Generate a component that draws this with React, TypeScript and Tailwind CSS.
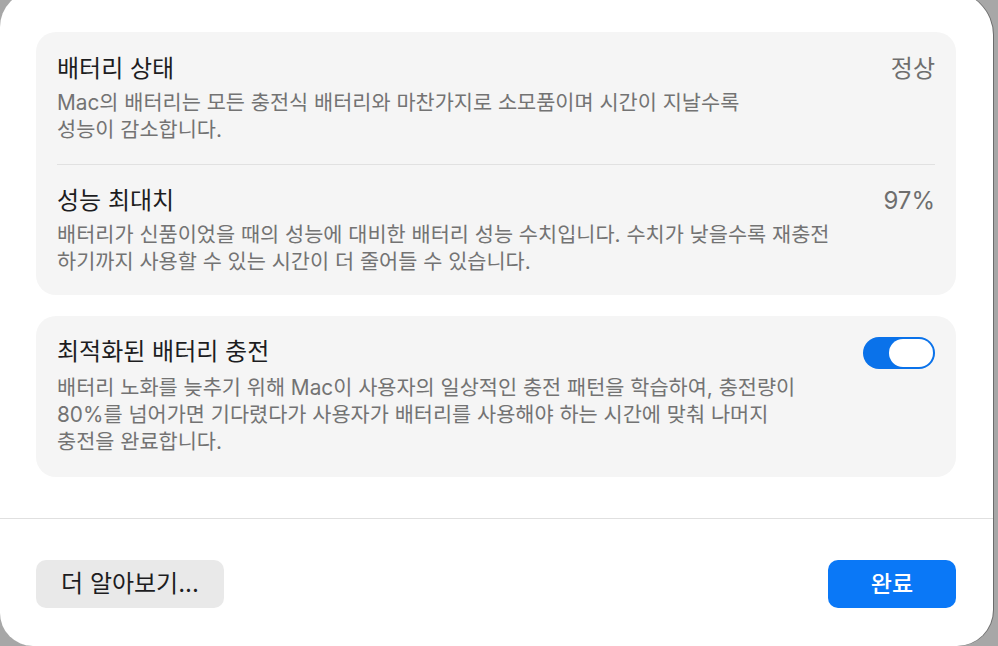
import React from "react";

const FONT = "font-['Inter','Noto_Sans_CJK_KR',sans-serif]";

function Row({
  title,
  right,
  lines,
  className,
}: {
  title: string;
  right?: React.ReactNode;
  lines: string[];
  className: string;
}) {
  return (
    <div className={`px-[21px] ${className}`}>
      <div className="flex items-start justify-between">
        <div className="text-[24px] leading-[30px] text-[#1d1d1f] whitespace-nowrap">{title}</div>
        {right}
      </div>
      <div className="mt-[5px] text-[20.8px] leading-[27px] text-[#737373] whitespace-nowrap">
        {lines.map((l, i) => (
          <div key={i}>{l}</div>
        ))}
      </div>
    </div>
  );
}

export default function App() {
  return (
    <div className={`w-[998px] h-[646px] overflow-hidden bg-[#a7a7a7] ${FONT}`}>
      <div className="mt-[-9px] w-[993px] h-[655px] rounded-tl-[36px] rounded-tr-[44px] rounded-bl-[33px] rounded-br-[36px] bg-white flex flex-col shadow-[1px_0_0_0_rgba(0,0,0,0.35)]">
        <div className="pt-[41px] pl-[36px] pr-[37px] pb-[41px] flex flex-col gap-[21px]">
          <div className="rounded-[20px] bg-[#f5f5f5]">
            <Row
              className="pt-[22px] pb-[21px]"
              title="배터리 상태"
              right={<div className="text-[24px] leading-[30px] text-[#6e6e6e]">정상</div>}
              lines={[
                "Mac의 배터리는 모든 충전식 배터리와 마찬가지로 소모품이며 시간이 지날수록",
                "성능이 감소합니다.",
              ]}
            />
            <div className="mx-[21px] h-px bg-[#e1e1e1]" />
            <Row
              className="pt-[21px] pb-[20px]"
              title="성능 최대치"
              right={<div className="text-[24px] leading-[30px] text-[#6e6e6e]">97%</div>}
              lines={[
                "배터리가 신품이었을 때의 성능에 대비한 배터리 성능 수치입니다. 수치가 낮을수록 재충전",
                "하기까지 사용할 수 있는 시간이 더 줄어들 수 있습니다.",
              ]}
            />
          </div>
          <div className="rounded-[20px] bg-[#f5f5f5]">
            <Row
              className="pt-[21px] pb-[22px]"
              title="최적화된 배터리 충전"
              right={
                <div className="w-[72px] h-[32px] rounded-full bg-[#0a72ea] p-[2px] flex justify-end">
                  <div className="w-[44px] h-[28px] rounded-full bg-white" />
                </div>
              }
              lines={[
                "배터리 노화를 늦추기 위해 Mac이 사용자의 일상적인 충전 패턴을 학습하여, 충전량이",
                "80%를 넘어가면 기다렸다가 사용자가 배터리를 사용해야 하는 시간에 맞춰 나머지",
                "충전을 완료합니다.",
              ]}
            />
          </div>
        </div>
        <div className="h-px bg-[#e0e0e0]" />
        <div className="pt-[41px] pl-[36px] pr-[37px] flex justify-between">
          <button className="w-[188px] h-[48px] rounded-[10px] bg-[#e9e9e9] text-[24px] text-[#1d1d1f]">
            더 알아보기...
          </button>
          <button className="w-[128px] h-[48px] rounded-[10px] bg-[#0a78f7] text-[23px] font-medium text-white">
            완료
          </button>
        </div>
      </div>
    </div>
  );
}
